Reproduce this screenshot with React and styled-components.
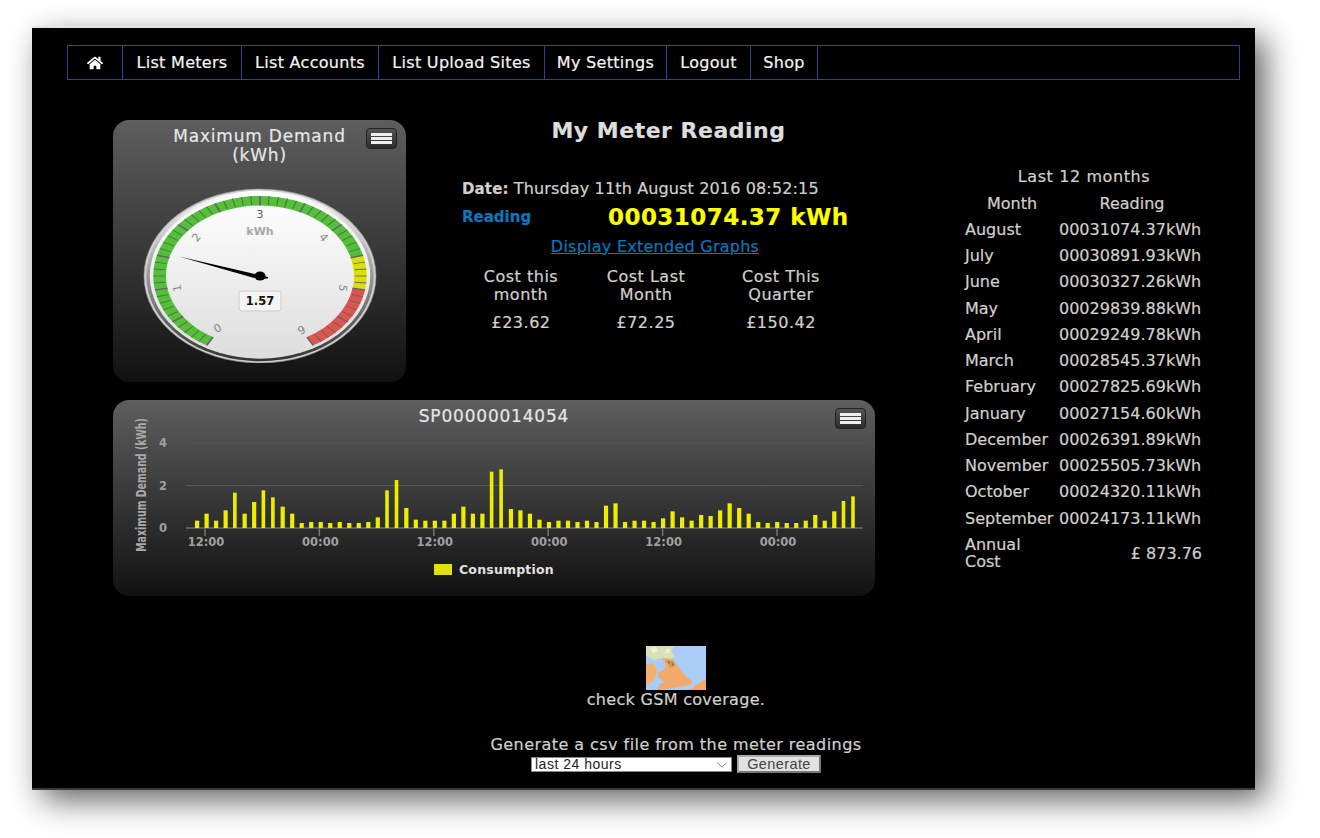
import React from 'react';
import styled, { createGlobalStyle } from 'styled-components';
import { FaHome } from 'react-icons/fa';
import { ChevronDown } from 'lucide-react';

const GlobalStyle = createGlobalStyle`
  html, body {
    margin: 0;
    padding: 0;
    background: #fff;
  }
  #root {
    height: 838px;
    overflow: hidden;
  }
`;

const Page = styled.div`
  padding: 28px 0 0 32px;
  font-family: "DejaVu Sans", sans-serif;
`;

const Screen = styled.div`
  width: 1223px;
  height: 762px;
  box-sizing: border-box;
  padding: 17px 15px 0 35px;
  background: #000;
  color: #d2d0cc;
  border-bottom: 2px solid #3a3a3a;
  box-shadow: 0 -2px 0 #e4e4e4, 10px 10px 30px rgba(0, 0, 0, 0.62);
  -webkit-text-stroke: 0.2px currentColor;
`;

const Nav = styled.nav`
  display: flex;
  height: 35px;
  box-sizing: border-box;
  border: 1px solid #34428c;
`;

const NavItem = styled.a`
  display: flex;
  align-items: center;
  justify-content: center;
  box-sizing: border-box;
  width: ${p => p.$width}px;
  border-right: 1px solid #34428c;
  color: #f4f4f4;
  font-size: 16px;
  letter-spacing: 0.3px;
`;

const Main = styled.div`
  display: flex;
  margin-top: 40px;
  padding-left: 46px;
`;

const LeftArea = styled.div`
  width: 762px;
`;

const TopRow = styled.div`
  display: flex;
  gap: 56px;
`;

const Panel = styled.section`
  position: relative;
  height: ${p => p.$height}px;
  width: ${p => p.$width};
  box-sizing: border-box;
  border-radius: 16px;
  background: linear-gradient(#5e5e5e, #111);
`;

const PanelTitle = styled.h3`
  position: relative;
  margin: 0;
  padding-top: 7px;
  text-align: center;
  color: #e6e6e6;
  font-size: 17px;
  font-weight: normal;
  line-height: 18.5px;
  letter-spacing: 0.8px;
`;

const MenuButton = styled.button`
  position: absolute;
  top: 8px;
  right: 9px;
  display: flex;
  flex-direction: column;
  justify-content: center;
  align-items: center;
  gap: 1.6px;
  width: 31px;
  height: 21px;
  padding: 0;
  border: 1px solid #222;
  border-radius: 4px;
  background: linear-gradient(#555, #2a2a2a);

  span {
    display: block;
    width: 21px;
    height: 2.8px;
    background: #eee;
  }
`;

const GaugeSvg = styled.svg`
  display: block;
  margin: 24px 0 0 30px;
  -webkit-text-stroke: 0;
`;

const ChartSvg = styled.svg`
  display: block;
  position: absolute;
  left: 0;
  top: 0;
  -webkit-text-stroke: 0;
`;

const Reading = styled.div`
  flex: 1;
`;

const Heading = styled.h1`
  margin: 0;
  padding-top: 1px;
  text-align: center;
  color: #ddd;
  font-size: 22px;
  line-height: 20px;
  letter-spacing: 0.5px;
`;

const DateLine = styled.div`
  margin-top: 38px;
  font-size: 16px;
  line-height: 20px;
  letter-spacing: 0.14px;
  white-space: nowrap;

  b {
    font-weight: bold;
    font-size: 15px;
  }
`;

const ReadingLine = styled.div`
  display: flex;
  align-items: center;
  height: 30px;
  margin-top: 3px;
`;

const ReadingLabel = styled.span`
  width: 146px;
  color: #0a77bf;
  font-size: 15px;
  font-weight: bold;
`;

const ReadingValue = styled.span`
  color: #ff0;
  font-size: 23px;
  font-weight: bold;
  letter-spacing: 0.45px;
  white-space: nowrap;
`;

const ExtendedLink = styled.a`
  display: block;
  width: 386px;
  margin-top: 6px;
  color: #0a77bf;
  font-size: 16px;
  line-height: 18px;
  letter-spacing: 0.25px;
  text-align: center;
  text-decoration: underline;
`;

const Costs = styled.div`
  display: grid;
  grid-template-columns: 118px 132px 138px;
  margin-top: 12px;
  text-align: center;
  font-size: 16px;
  line-height: 17.5px;
  letter-spacing: 0.5px;
`;

const CostValue = styled.div`
  margin-top: 11px;
`;

const ChartPanelWrap = styled.div`
  margin-top: 18px;
`;

const Months = styled.div`
  margin: 48px 0 0 90px;
  width: 240px;
  font-size: 16px;
`;

const MonthsTitle = styled.div`
  text-align: center;
  width: 238px;
  line-height: 18px;
  letter-spacing: 0.6px;
`;

const MonthsGrid = styled.div`
  display: grid;
  grid-template-columns: 94px 146px;
  grid-auto-rows: 26.25px;
  align-items: center;
  margin-top: 4px;
  white-space: nowrap;
`;

const ColHead = styled.div`
  text-align: center;
`;

const Money = styled.div`
  margin-top: 18px;
  text-align: right;
  padding-right: 3px;
`;

const AnnualLabel = styled.div`
  line-height: 17px;
  margin-top: 18px;
`;

const Footer = styled.div`
  display: flex;
  flex-direction: column;
  align-items: center;
  margin-top: 50px;
  padding-left: 45px;
  font-size: 16px;
  letter-spacing: 0.3px;
`;

const MapThumb = styled.svg`
  display: block;
  filter: blur(0.6px);
`;

const FooterText = styled.div`
  line-height: 18px;
  margin-top: ${p => p.$top}px;
  letter-spacing: ${p => p.$spacing}px;
`;

const CsvForm = styled.form`
  display: flex;
  align-items: center;
  gap: 5px;
  margin-top: 1px;
`;

const SelectWrap = styled.div`
  position: relative;
  display: flex;

  svg {
    position: absolute;
    right: 1px;
    top: -1px;
    color: #666;
    pointer-events: none;
  }
`;

const RangeSelect = styled.select`
  width: 201px;
  height: 15px;
  padding: 0 3px;
  box-sizing: border-box;
  border: 1px solid #888;
  border-radius: 0;
  appearance: none;
  background: #fff;
  color: #222;
  font-family: "Liberation Sans", sans-serif;
  font-size: 14px;
  line-height: 13px;
  letter-spacing: 0.5px;
  -webkit-text-stroke: 0;
`;

const GenerateButton = styled.button`
  width: 84px;
  height: 18px;
  padding: 0;
  box-sizing: border-box;
  border: 2px solid #777;
  border-top-color: #aaa;
  border-left-color: #aaa;
  background: #e2e2e2;
  color: #444;
  font-family: "Liberation Sans", sans-serif;
  font-size: 14.5px;
  line-height: 14px;
  letter-spacing: 0.4px;
  -webkit-text-stroke: 0;
`;

const navItems = [
  ['List Meters', 119],
  ['List Accounts', 137],
  ['List Upload Sites', 166],
  ['My Settings', 122],
  ['Logout', 84],
  ['Shop', 67],
];

const months = [
  ['August', '00031074.37kWh'],
  ['July', '00030891.93kWh'],
  ['June', '00030327.26kWh'],
  ['May', '00029839.88kWh'],
  ['April', '00029249.78kWh'],
  ['March', '00028545.37kWh'],
  ['February', '00027825.69kWh'],
  ['January', '00027154.60kWh'],
  ['December', '00026391.89kWh'],
  ['November', '00025505.73kWh'],
  ['October', '00024320.11kWh'],
  ['September', '00024173.11kWh'],
];

const costs = [
  ['Cost this', 'month', '£23.62'],
  ['Cost Last', 'Month', '£72.25'],
  ['Cost This', 'Quarter', '£150.42'],
];

// bar heights in px, read off the picture
const bars = [
  22, 43, 22, 53, 106, 43, 78, 113, 92, 64, 43, 15, 18, 18, 15, 18, 15, 15, 18, 32, 113, 144, 60, 25, 22, 22, 22, 43, 64, 43, 43, 169, 176,
  57, 53, 43, 25, 18, 22, 22, 18, 22, 18, 67, 74, 18, 22, 22, 18, 29, 50, 32, 22, 39, 36, 53, 74, 60, 43, 18, 15, 18, 15, 15, 22, 39, 22, 50, 81, 95,
].map(h => h / 3);

const polar = (angle, r) => {
  const a = (angle - 90) * Math.PI / 180;
  return [r * Math.cos(a), r * Math.sin(a)];
};

const arcPath = (from, to, r1, r2) => {
  const [x1, y1] = polar(from, r1);
  const [x2, y2] = polar(to, r1);
  const [x3, y3] = polar(to, r2);
  const [x4, y4] = polar(from, r2);
  const large = to - from > 180 ? 1 : 0;
  return `M${x1} ${y1}A${r1} ${r1} 0 ${large} 1 ${x2} ${y2}L${x3} ${y3}A${r2} ${r2} 0 ${large} 0 ${x4} ${y4}Z`;
};

const Gauge = () => {
  const ticks = [];
  for (let i = 0; i <= 60; i++) {
    const angle = -150 + i * 5;
    const major = i % 5 === 0;
    const [x1, y1] = polar(angle, major ? 81 : 82);
    const [x2, y2] = polar(angle, 92);
    ticks.push(<line key={i} x1={x1} y1={y1} x2={x2} y2={y2} stroke={major ? '#666' : '#4f7343'} strokeWidth={major ? 1.6 : 1} />);
  }
  const labels = [
    [0, -42, 53, -30],
    [1, -82, 12, -100],
    [2, -63, -38, -50],
    [3, 0, -61, 0],
    [4, 63, -38, 50],
    [5, 82, 12, 100],
    [6, 41, 53, 150],
  ];
  return (
    <GaugeSvg width="234" height="175" viewBox="-117 -88 234 175">
      <defs>
        <linearGradient id="rim" x1="0" y1="0" x2="0" y2="1">
          <stop offset="0" stopColor="#fff" />
          <stop offset="1" stopColor="#333" />
        </linearGradient>
        <linearGradient id="face" x1="0" y1="0" x2="0" y2="1">
          <stop offset="0" stopColor="#fff" />
          <stop offset="1" stopColor="#ddd" />
        </linearGradient>
      </defs>
      <g transform="scale(1.16 .87)">
        <circle r="100" fill="#cfcfcf" stroke="#999" strokeWidth="0.6" />
        <circle r="98" fill="url(#rim)" />
        <circle r="95" fill="url(#face)" />
        <path d={arcPath(-150, 75, 92, 81)} fill="#55bf3b" />
        <path d={arcPath(75, 100, 92, 81)} fill="#dddf0d" />
        <path d={arcPath(100, 150, 92, 81)} fill="#df5353" />
        {ticks}
      </g>
      {labels.map(([n, x, y, rot]) => (
        <text key={n} x={x} y={y} transform={`rotate(${rot} ${x} ${y})`} textAnchor="middle" dominantBaseline="middle" fontSize="11" fontFamily="DejaVu Sans, sans-serif" fill={n === 3 ? '#555' : '#888'}>{n}</text>
      ))}
      <text x="0" y="-44" textAnchor="middle" dominantBaseline="middle" fontSize="11" fontWeight="bold" fontFamily="DejaVu Sans, sans-serif" fill="#a6a6a6">kWh</text>
      <path d="M-81 -19.5 L8 1 L8 2.5 L-2 3 Z" fill="#000" />
      <ellipse cx="0" cy="0" rx="5.5" ry="4.5" fill="#000" />
      <rect x="-21" y="15" width="42" height="20" rx="3" fill="#f4f4f4" stroke="#ccc" />
      <text x="0" y="25.5" textAnchor="middle" dominantBaseline="middle" fontSize="11.5" fontWeight="bold" fontFamily="DejaVu Sans, sans-serif" fill="#111">1.57</text>
    </GaugeSvg>
  );
};

const Chart = () => {
  const base = 128;
  const unit = 21.25;
  const axisText = { fontFamily: 'DejaVu Sans, sans-serif', fontSize: 11.5, fontWeight: 'bold', fill: '#a0a0a0' };
  return (
    <ChartSvg width="762" height="196">
      {[2, 4].map(v => (
        <line key={v} x1="73" x2="750" y1={base - v * unit} y2={base - v * unit} stroke="#555" />
      ))}
      <line x1="73" x2="750" y1={base} y2={base} stroke="#8a8a8a" />
      {[0, 2, 4].map(v => (
        <text key={v} x="50" y={base - v * unit + 4} textAnchor="middle" {...axisText}>{v}</text>
      ))}
      {bars.map((h, i) => (
        <rect key={i} x={82 + i * 9.51} y={base - h} width={h > 26 ? 3.6 : 4.2} height={h} fill="#eded00" />
      ))}
      {['12:00', '00:00', '12:00', '00:00', '12:00', '00:00'].map((t, i) => {
        const x = 92 + i * 114.4;
        return (
          <g key={i}>
            <line x1={x} x2={x} y1={base} y2={base + 8} stroke="#777" strokeWidth="1.4" />
            <text x={x + 1} y={base + 18} textAnchor="middle" {...axisText}>{t}</text>
          </g>
        );
      })}
      <text transform="translate(33 85) rotate(-90) scale(0.82 1.15)" textAnchor="middle" fontFamily="DejaVu Sans, sans-serif" fontSize="11.5" fontWeight="bold" fill="#aaa">Maximum Demand (kWh)</text>
      <rect x="321" y="164" width="18" height="11" fill="#e2e200" />
      <text x="346" y="174" fontFamily="DejaVu Sans, sans-serif" fontSize="12.5" fontWeight="bold" letterSpacing="0.2" fill="#e0e0e0">Consumption</text>
    </ChartSvg>
  );
};

const CoverageMap = () => (
  <MapThumb width="60" height="44" viewBox="0 0 60 44">
    <rect width="60" height="44" fill="#a9cdf6" />
    <path d="M0 0H28L25 6L29 10L24 14L16 12L8 14L0 9Z" fill="#d9e2b4" />
    <path d="M4 2L10 1L12 5L7 7ZM20 3L24 3L23 7L20 7Z" fill="#f1efdc" />
    <path d="M16 12L27 13L31 19L36 26L41 31L46 35L45 39L32 41L20 43L11 44L14 38L19 36L13 32L12 26L18 24L20 19Z" fill="#f3a968" />
    <path d="M20 14L27 15L29 20L24 22Z" fill="#c49a5c" />
    <path d="M0 19L7 17L11 23L9 33L0 40Z" fill="#f3b071" />
    <path d="M44 44L50 39L60 33V44Z" fill="#f3a968" />
    <path d="M22 15L24 16L23 18ZM26 17L28 18L27 20Z" fill="#6a5438" />
  </MapThumb>
);

const Menu = () => (
  <MenuButton type="button" aria-label="Chart menu">
    <span />
    <span />
    <span />
  </MenuButton>
);

export default function App() {
  return (
    <Page>
      <GlobalStyle />
      <Screen>
        <Nav>
          <NavItem $width={55}><FaHome size={16} color="#fff" /></NavItem>
          {navItems.map(([label, width]) => (
            <NavItem key={label} $width={width}>{label}</NavItem>
          ))}
        </Nav>
        <Main>
          <LeftArea>
            <TopRow>
              <Panel $height={262} $width="293px">
                <PanelTitle>Maximum Demand<br />(kWh)</PanelTitle>
                <Menu />
                <Gauge />
              </Panel>
              <Reading>
                <Heading>My Meter Reading</Heading>
                <DateLine><b>Date:</b> Thursday 11th August 2016 08:52:15</DateLine>
                <ReadingLine>
                  <ReadingLabel>Reading</ReadingLabel>
                  <ReadingValue>00031074.37 kWh</ReadingValue>
                </ReadingLine>
                <ExtendedLink href="#">Display Extended Graphs</ExtendedLink>
                <Costs>
                  {costs.map(([a, b, c]) => (
                    <div key={a}>
                      {a}<br />{b}
                      <CostValue>{c}</CostValue>
                    </div>
                  ))}
                </Costs>
              </Reading>
            </TopRow>
            <ChartPanelWrap>
              <Panel $height={196} $width="100%">
                <Chart />
                <PanelTitle>SP00000014054</PanelTitle>
                <Menu />
              </Panel>
            </ChartPanelWrap>
          </LeftArea>
          <Months>
            <MonthsTitle>Last 12 months</MonthsTitle>
            <MonthsGrid>
              <ColHead>Month</ColHead>
              <ColHead>Reading</ColHead>
              {months.map(([m, r]) => (
                <React.Fragment key={m}>
                  <div>{m}</div>
                  <div>{r}</div>
                </React.Fragment>
              ))}
              <AnnualLabel>Annual<br />Cost</AnnualLabel>
              <Money>£ 873.76</Money>
            </MonthsGrid>
          </Months>
        </Main>
        <Footer>
          <CoverageMap />
          <FooterText $top={1} $spacing={0.3}>check GSM coverage.</FooterText>
          <FooterText $top={27} $spacing={0.45}>Generate a csv file from the meter readings</FooterText>
          <CsvForm>
            <SelectWrap>
              <RangeSelect defaultValue="24">
                <option value="24">last 24 hours</option>
              </RangeSelect>
              <ChevronDown size={18} strokeWidth={1.1} />
            </SelectWrap>
            <GenerateButton type="button">Generate</GenerateButton>
          </CsvForm>
        </Footer>
      </Screen>
    </Page>
  );
}
